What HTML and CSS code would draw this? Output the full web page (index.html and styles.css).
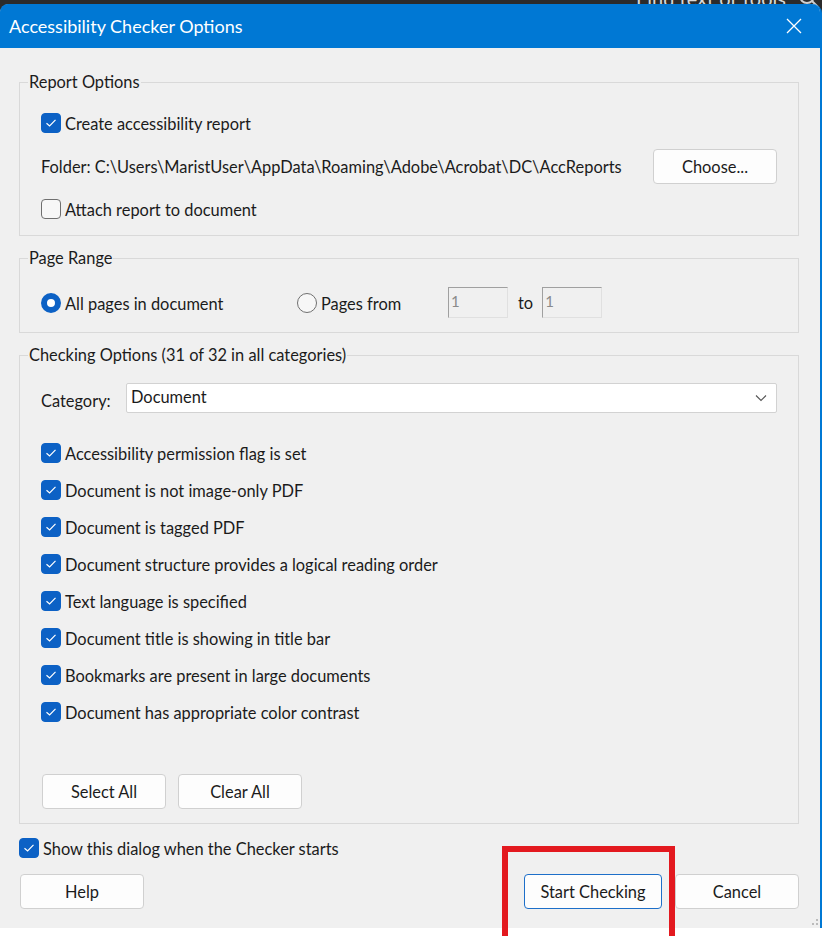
FILE: index.html
```html
<!DOCTYPE html>
<html lang="en">
<head>
<meta charset="utf-8">
<title>Accessibility Checker Options</title>
<link rel="stylesheet" href="styles.css">
</head>
<body>
<div class="backdrop-search">
  <span class="find-text">Find text or tools</span>
  <svg class="find-icon" width="22" height="22" viewBox="0 0 22 22"><circle cx="9" cy="9" r="7" fill="none" stroke="#d0d0d0" stroke-width="2"/><path d="M14 14 L20 20" stroke="#d0d0d0" stroke-width="2"/></svg>
</div>
<div class="dialog">
  <div class="titlebar">
    <span class="title">Accessibility Checker Options</span>
    <svg class="close" width="16" height="16" viewBox="0 0 16 16"><path d="M1 1 L15 15 M15 1 L1 15" stroke="#fff" stroke-width="1.3" fill="none"/></svg>
  </div>
  <div class="content">
    <fieldset class="group report">
      <legend>Report Options</legend>
      <div class="group-body">
        <label class="check-row"><span class="cb checked"><svg width="12" height="10" viewBox="0 0 12 10"><path d="M1.5 5.2 L4.6 8 L10.5 1.8" stroke="#fff" stroke-width="1.2" fill="none"/></svg></span><span class="lbl">Create accessibility report</span></label>
        <div class="folder-row">
          <span>Folder: C:\Users\MaristUser\AppData\Roaming\Adobe\Acrobat\DC\AccReports</span>
          <button class="btn">Choose...</button>
        </div>
        <label class="check-row"><span class="cb"></span><span class="lbl">Attach report to document</span></label>
      </div>
    </fieldset>

    <fieldset class="group range">
      <legend>Page Range</legend>
      <div class="group-body range-row">
        <label class="radio-label all"><span class="rb on"></span><span class="lbl">All pages in document</span></label>
        <label class="radio-label from"><span class="rb"></span><span class="lbl">Pages from</span></label>
        <span class="num">1</span>
        <span class="to">to</span>
        <span class="num">1</span>
      </div>
    </fieldset>

    <fieldset class="group checking">
      <legend>Checking Options (31 of 32 in all categories)</legend>
      <div class="group-body">
        <div class="category-row">
          <span class="cat-label">Category:</span>
          <div class="select"><span>Document</span><svg width="12" height="8" viewBox="0 0 12 8"><path d="M1 1.5 L6 6.5 L11 1.5" stroke="#555" stroke-width="1.1" fill="none"/></svg></div>
        </div>
        <ul class="checks">
          <li class="check-row"><span class="cb checked"><svg width="12" height="10" viewBox="0 0 12 10"><path d="M1.5 5.2 L4.6 8 L10.5 1.8" stroke="#fff" stroke-width="1.2" fill="none"/></svg></span><span class="lbl">Accessibility permission flag is set</span></li>
          <li class="check-row"><span class="cb checked"><svg width="12" height="10" viewBox="0 0 12 10"><path d="M1.5 5.2 L4.6 8 L10.5 1.8" stroke="#fff" stroke-width="1.2" fill="none"/></svg></span><span class="lbl">Document is not image-only PDF</span></li>
          <li class="check-row"><span class="cb checked"><svg width="12" height="10" viewBox="0 0 12 10"><path d="M1.5 5.2 L4.6 8 L10.5 1.8" stroke="#fff" stroke-width="1.2" fill="none"/></svg></span><span class="lbl">Document is tagged PDF</span></li>
          <li class="check-row"><span class="cb checked"><svg width="12" height="10" viewBox="0 0 12 10"><path d="M1.5 5.2 L4.6 8 L10.5 1.8" stroke="#fff" stroke-width="1.2" fill="none"/></svg></span><span class="lbl">Document structure provides a logical reading order</span></li>
          <li class="check-row"><span class="cb checked"><svg width="12" height="10" viewBox="0 0 12 10"><path d="M1.5 5.2 L4.6 8 L10.5 1.8" stroke="#fff" stroke-width="1.2" fill="none"/></svg></span><span class="lbl">Text language is specified</span></li>
          <li class="check-row"><span class="cb checked"><svg width="12" height="10" viewBox="0 0 12 10"><path d="M1.5 5.2 L4.6 8 L10.5 1.8" stroke="#fff" stroke-width="1.2" fill="none"/></svg></span><span class="lbl">Document title is showing in title bar</span></li>
          <li class="check-row"><span class="cb checked"><svg width="12" height="10" viewBox="0 0 12 10"><path d="M1.5 5.2 L4.6 8 L10.5 1.8" stroke="#fff" stroke-width="1.2" fill="none"/></svg></span><span class="lbl">Bookmarks are present in large documents</span></li>
          <li class="check-row"><span class="cb checked"><svg width="12" height="10" viewBox="0 0 12 10"><path d="M1.5 5.2 L4.6 8 L10.5 1.8" stroke="#fff" stroke-width="1.2" fill="none"/></svg></span><span class="lbl">Document has appropriate color contrast</span></li>
        </ul>
        <div class="select-buttons">
          <button class="btn">Select All</button>
          <button class="btn">Clear All</button>
        </div>
      </div>
    </fieldset>

    <label class="check-row show-row"><span class="cb checked"><svg width="12" height="10" viewBox="0 0 12 10"><path d="M1.5 5.2 L4.6 8 L10.5 1.8" stroke="#fff" stroke-width="1.2" fill="none"/></svg></span><span class="lbl">Show this dialog when the Checker starts</span></label>

    <div class="footer">
      <button class="btn">Help</button>
      <div class="footer-right">
        <button class="btn primary">Start Checking</button>
        <button class="btn">Cancel</button>
      </div>
    </div>
  </div>
  <svg class="grip" width="10" height="8" viewBox="0 0 10 8"><rect x="6" y="0" width="2" height="2" fill="#bbb"/><rect x="2" y="4" width="2" height="2" fill="#bbb"/><rect x="6" y="4" width="2" height="2" fill="#bbb"/></svg>
  <div class="highlight"></div>
</div>
</body>
</html>
```

FILE: styles.css
```css
* { box-sizing: border-box; }

html, body {
  margin: 0;
  padding: 0;
}

body {
  width: 822px;
  height: 936px;
  overflow: hidden;
  position: relative;
  background: linear-gradient(#2b2b2b 0, #2b2b2b 40px, #ffffff 40px);
  font-family: Lato, "Liberation Sans", sans-serif;
  font-size: 16.4px;
  color: #1b1b1b;
}

.backdrop-search {
  position: absolute;
  top: -14px;
  left: 636px;
  display: flex;
  align-items: center;
  gap: 12px;
  color: #d8d8d8;
  font-size: 20px;
}

.dialog {
  position: relative;
  margin-top: 4px;
  width: 822px;
  background: #f0f0f0;
  border-right: 2px solid #0078d4;
  border-radius: 9px 9px 0 0;
}

.titlebar {
  height: 44px;
  background: #0078d4;
  border-radius: 8px 8px 0 0;
  display: flex;
  align-items: center;
  justify-content: space-between;
  padding: 0 18px 0 9px;
  color: #fff;
}

.title {
  font-size: 18px;
}

.content {
  padding: 24px 21px 19px 19px;
}

.group {
  margin: 0;
  padding: 0;
  border: 1px solid #d9d9d9;
  min-width: 0;
}

.group + .group { margin-top: 12px; }

.group legend {
  margin-left: 8px;
  padding: 0 1px;
  line-height: 20px;
  font-size: 16.4px;
  color: #1b1b1b;
}

.group-body {
  padding: 0 21px 0 21px;
}

.report .group-body {
  padding-top: 21px;
  padding-bottom: 16px;
  display: flex;
  flex-direction: column;
  gap: 16px;
}

.check-row {
  display: flex;
  align-items: center;
  height: 20px;
  line-height: 20px;
  white-space: nowrap;
}

.lbl {
  position: relative;
  top: 1px;
}

.cb {
  width: 20px;
  height: 20px;
  border-radius: 4px;
  border: 1px solid #6f6f6f;
  background: #f7f7f7;
  margin-right: 4px;
  flex: none;
  display: flex;
  align-items: center;
  justify-content: center;
}

.cb.checked {
  background: #0c61c5;
  border-color: #0c61c5;
}

.folder-row {
  display: flex;
  align-items: center;
  justify-content: space-between;
  height: 34px;
}

.btn {
  font: inherit;
  color: #1b1b1b;
  width: 124px;
  height: 35px;
  background: #fdfdfd;
  border: 1px solid #d0d0d0;
  border-radius: 4px;
  padding: 0;
}

.btn.primary {
  width: 138px;
  border-color: #1d6fc9;
}

.range-row {
  padding-top: 19px;
  padding-bottom: 14px;
  display: flex;
  align-items: center;
  height: 64px;
}

.radio-label {
  display: flex;
  align-items: center;
  white-space: nowrap;
}

.radio-label.all { width: 256px; }
.radio-label.from { width: 151px; }

.rb {
  width: 20px;
  height: 20px;
  border-radius: 50%;
  border: 1px solid #707070;
  background: #f7f7f7;
  margin-right: 4px;
  flex: none;
}

.rb.on {
  border: 6px solid #0c61c5;
  background: #fff;
}

.num {
  width: 60px;
  height: 31px;
  border: 1px solid #e0e0e0;
  border-top-color: #a0a0a0;
  border-left-color: #a0a0a0;
  background: #f0f0f0;
  color: #8a8a8a;
  font-size: 15px;
  padding: 4px 0 0 2px;
}

.to {
  margin: 0 9px 0 10px;
}

.checking .group-body {
  padding-top: 18px;
  padding-bottom: 14px;
}

.category-row {
  display: flex;
  align-items: center;
  height: 30px;
}

.cat-label {
  width: 85px;
  padding-top: 5px;
}

.select {
  flex: 1;
  height: 30px;
  background: #fff;
  border: 1px solid #d2d2d2;
  border-radius: 2px;
  display: flex;
  align-items: center;
  justify-content: space-between;
  padding: 0 9px 0 4px;
}

.select span { margin-top: -3px; }

.checks {
  list-style: none;
  margin: 30px 0 0 0;
  padding: 0;
  display: flex;
  flex-direction: column;
  gap: 17px;
}

.select-buttons {
  margin-top: 52px;
  display: flex;
  gap: 12px;
  padding-left: 1px;
}

.show-row {
  margin-top: 14px;
}

.footer {
  margin-top: 16px;
  display: flex;
  justify-content: space-between;
  padding-left: 1px;
}

.footer-right {
  display: flex;
  gap: 13px;
}

.grip {
  position: absolute;
  right: 0;
  bottom: 1px;
}

.highlight {
  position: absolute;
  left: 502px;
  top: 842px;
  width: 173px;
  height: 100px;
  border: 6px solid #e3191f;
}
```
